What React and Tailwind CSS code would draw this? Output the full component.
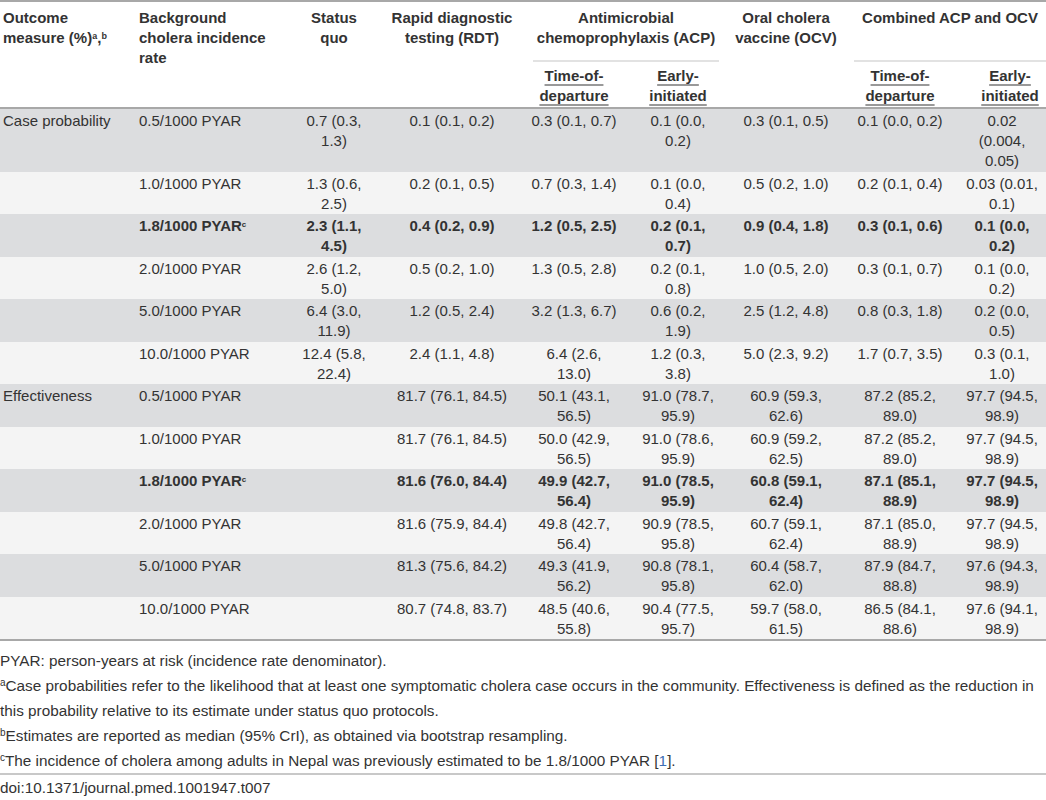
const caseRows = [
  { rate: '0.5/1000 PYAR', v: ['0.7 (0.3,|1.3)', '0.1 (0.1, 0.2)', '0.3 (0.1, 0.7)', '0.1 (0.0,|0.2)', '0.3 (0.1, 0.5)', '0.1 (0.0, 0.2)', '0.02|(0.004,|0.05)'] },
  { rate: '1.0/1000 PYAR', v: ['1.3 (0.6,|2.5)', '0.2 (0.1, 0.5)', '0.7 (0.3, 1.4)', '0.1 (0.0,|0.4)', '0.5 (0.2, 1.0)', '0.2 (0.1, 0.4)', '0.03 (0.01,|0.1)'] },
  { rate: '1.8/1000 PYAR', bold: true, v: ['2.3 (1.1,|4.5)', '0.4 (0.2, 0.9)', '1.2 (0.5, 2.5)', '0.2 (0.1,|0.7)', '0.9 (0.4, 1.8)', '0.3 (0.1, 0.6)', '0.1 (0.0,|0.2)'] },
  { rate: '2.0/1000 PYAR', v: ['2.6 (1.2,|5.0)', '0.5 (0.2, 1.0)', '1.3 (0.5, 2.8)', '0.2 (0.1,|0.8)', '1.0 (0.5, 2.0)', '0.3 (0.1, 0.7)', '0.1 (0.0,|0.2)'] },
  { rate: '5.0/1000 PYAR', v: ['6.4 (3.0,|11.9)', '1.2 (0.5, 2.4)', '3.2 (1.3, 6.7)', '0.6 (0.2,|1.9)', '2.5 (1.2, 4.8)', '0.8 (0.3, 1.8)', '0.2 (0.0,|0.5)'] },
  { rate: '10.0/1000 PYAR', v: ['12.4 (5.8,|22.4)', '2.4 (1.1, 4.8)', '6.4 (2.6,|13.0)', '1.2 (0.3,|3.8)', '5.0 (2.3, 9.2)', '1.7 (0.7, 3.5)', '0.3 (0.1,|1.0)'] },
];

const effRows = [
  { rate: '0.5/1000 PYAR', v: ['', '81.7 (76.1, 84.5)', '50.1 (43.1,|56.5)', '91.0 (78.7,|95.9)', '60.9 (59.3,|62.6)', '87.2 (85.2,|89.0)', '97.7 (94.5,|98.9)'] },
  { rate: '1.0/1000 PYAR', v: ['', '81.7 (76.1, 84.5)', '50.0 (42.9,|56.5)', '91.0 (78.6,|95.9)', '60.9 (59.2,|62.5)', '87.2 (85.2,|89.0)', '97.7 (94.5,|98.9)'] },
  { rate: '1.8/1000 PYAR', bold: true, v: ['', '81.6 (76.0, 84.4)', '49.9 (42.7,|56.4)', '91.0 (78.5,|95.9)', '60.8 (59.1,|62.4)', '87.1 (85.1,|88.9)', '97.7 (94.5,|98.9)'] },
  { rate: '2.0/1000 PYAR', v: ['', '81.6 (75.9, 84.4)', '49.8 (42.7,|56.4)', '90.9 (78.5,|95.8)', '60.7 (59.1,|62.4)', '87.1 (85.0,|88.9)', '97.7 (94.5,|98.9)'] },
  { rate: '5.0/1000 PYAR', v: ['', '81.3 (75.6, 84.2)', '49.3 (41.9,|56.2)', '90.8 (78.1,|95.8)', '60.4 (58.7,|62.0)', '87.9 (84.7,|88.8)', '97.6 (94.3,|98.9)'] },
  { rate: '10.0/1000 PYAR', v: ['', '80.7 (74.8, 83.7)', '48.5 (40.6,|55.8)', '90.4 (77.5,|95.7)', '59.7 (58.0,|61.5)', '86.5 (84.1,|88.6)', '97.6 (94.1,|98.9)'] },
];

// each '|' in a value is a line break as in the printed table
function Lines({ text }) {
  const parts = text.split('|');
  return parts.map((p, i) => (
    <span key={i}>{p}{i < parts.length - 1 && <br />}</span>
  ));
}

function Section({ label, rows }) {
  return rows.map((r, i) => (
    <tr key={r.rate} className={i % 2 === 0 ? 'bg-[#dcdddf]' : 'bg-[#f4f4f4]'}>
      <td className="px-[3px] pt-[2px] pb-[0.5px] align-top whitespace-nowrap">{i === 0 ? label : ''}</td>
      <td className={'px-[3px] pt-[2px] pb-[0.5px] align-top whitespace-nowrap ' + (r.bold ? 'font-bold' : '')}>
        {r.rate}{r.bold && <sup className="text-[8px] font-bold">c</sup>}
      </td>
      {r.v.map((val, j) => (
        <td key={j} className={'pt-[2px] pb-[0.5px] align-top text-center whitespace-nowrap ' + (r.bold ? 'font-bold' : '')}>
          <Lines text={val} />
        </td>
      ))}
    </tr>
  ));
}

export default function App() {
  return (
    <div className="w-[1046px] bg-white text-[15px] leading-[20px] text-[#333] font-['Liberation_Sans',Arial,sans-serif]">
      <table className="w-full table-fixed border-collapse border-t-2 border-b-2 border-[#a8a8a8]">
        <colgroup>
          <col className="w-[136px]" />
          <col className="w-[150px]" />
          <col className="w-[96px]" />
          <col className="w-[140px]" />
          <col className="w-[104px]" />
          <col className="w-[104px]" />
          <col className="w-[112px]" />
          <col className="w-[116px]" />
          <col className="w-[88px]" />
        </colgroup>
        <thead className="border-b-2 border-[#a8a8a8]">
          <tr className="font-bold">
            <th rowSpan={2} className="px-[3px] pt-[6px] align-top text-left whitespace-nowrap">Outcome<br />measure (%)<sup className="text-[9px]">a</sup>,<sup className="text-[9px]">b</sup></th>
            <th rowSpan={2} className="px-[3px] pt-[6px] align-top text-left whitespace-nowrap">Background<br />cholera incidence<br />rate</th>
            <th rowSpan={2} className="pt-[6px] align-top text-center">Status<br />quo</th>
            <th rowSpan={2} className="pt-[6px] align-top text-center whitespace-nowrap">Rapid diagnostic<br />testing (RDT)</th>
            <th colSpan={2} className="pt-[6px] align-top text-center whitespace-nowrap">
              <div className="mx-[11px] pb-[12px] border-b-2 border-[#e2e2e2]">Antimicrobial<br />chemoprophylaxis (ACP)</div>
            </th>
            <th rowSpan={2} className="pt-[6px] align-top text-center whitespace-nowrap">Oral cholera<br />vaccine (OCV)</th>
            <th colSpan={2} className="pt-[6px] align-top text-center">
              <div className="ml-[12px] pb-[32px] border-b-2 border-[#e2e2e2] whitespace-nowrap">Combined ACP and OCV</div>
            </th>
          </tr>
          <tr className="font-bold">
            {[0, 1, 2, 3].map(k => (
              <th key={k} className={'pt-[4px] pb-[1px] align-top text-center ' + (k === 3 ? 'pl-[16px]' : '')}>
                <span className="underline decoration-[#999] decoration-2 underline-offset-[3px]">{k % 2 === 0 ? 'Time-of-' : 'Early-'}</span><br />
                <span className="underline decoration-[#999] decoration-2 underline-offset-[3px]">{k % 2 === 0 ? 'departure' : 'initiated'}</span>
              </th>
            ))}
          </tr>
        </thead>
        <tbody>
          <Section label="Case probability" rows={caseRows} />
          <Section label="Effectiveness" rows={effRows} />
        </tbody>
      </table>

      <div className="mt-[7px] text-[15.3px] leading-[25px] text-[#333] whitespace-nowrap">
        <div>PYAR: person-years at risk (incidence rate denominator).</div>
        <div><sup className="text-[10px]">a</sup>Case probabilities refer to the likelihood that at least one symptomatic cholera case occurs in the community. Effectiveness is defined as the reduction in<br />this probability relative to its estimate under status quo protocols.</div>
        <div><sup className="text-[10px]">b</sup>Estimates are reported as median (95% CrI), as obtained via bootstrap resampling.</div>
        <div><sup className="text-[10px]">c</sup>The incidence of cholera among adults in Nepal was previously estimated to be 1.8/1000 PYAR [<span className="text-[#3c6eb4]">1</span>].</div>
      </div>
      <div className="border-t-2 border-[#c8c8c8] text-[15.3px] leading-[25px] text-[#333]">
        doi:10.1371/journal.pmed.1001947.t007
      </div>
    </div>
  );
}
